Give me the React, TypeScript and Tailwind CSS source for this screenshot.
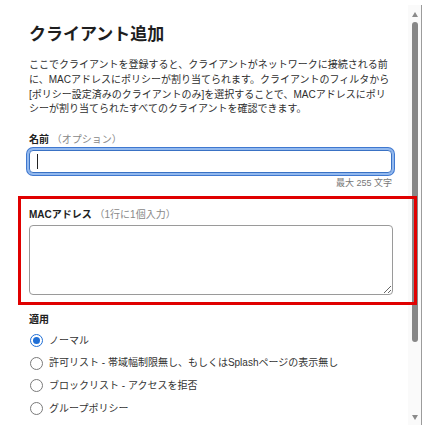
import React from "react";

const font = { fontFamily: '"Liberation Sans", "Noto Sans CJK JP", sans-serif' };

function Radio({ checked, label }: { checked?: boolean; label: string }) {
  return (
    <div className="flex h-[22.7px] items-center gap-[6px]">
      {checked ? (
        <span className="ml-[1px] flex h-[13px] w-[13px] items-center justify-center rounded-full border-[1.5px] border-[#1f6fd6]">
          <span className="h-[7px] w-[7px] rounded-full bg-[#1f6fd6]" />
        </span>
      ) : (
        <span className="ml-[1px] h-[13px] w-[13px] rounded-full border-[1.5px] border-[#7a7a7a]" />
      )}
      <span className="text-[10px] leading-[14px] text-[#333] whitespace-nowrap">{label}</span>
    </div>
  );
}

export default function App() {
  return (
    <div className="relative flex h-[447px] w-[434px] overflow-hidden bg-white" style={font}>
      <div className="w-[408px] shrink-0 pl-[29px] pr-[15px]">
        <h1 className="pt-[23px] text-[17px] font-bold leading-[24px] text-[#1e1e1e]">クライアント追加</h1>
        <p className="mt-[11px] whitespace-nowrap text-[10px] leading-[14.8px] text-[#2e2e2e]">
          ここでクライアントを登録すると、クライアントがネットワークに接続される前
          <br />
          に、MACアドレスにポリシーが割り当てられます。クライアントのフィルタから
          <br />
          [ポリシー設定済みのクライアントのみ]を選択することで、MACアドレスにポリ
          <br />
          シーが割り当てられたすべてのクライアントを確認できます。
        </p>
        <div className="mt-[16px] text-[10px] leading-[14px]">
          <span className="font-bold text-[#222]">名前</span>
          <span className="text-[#888]"> （オプション）</span>
        </div>
        <div className="mt-[3px] flex h-[23px] w-[363px] items-center rounded-[4px] border border-[#3a72c4] pl-[7px] shadow-[0_0_0_2px_#93b9ee,0_0_0_3px_#3f78d0]">
          <span className="h-[15px] w-px bg-[#222]" />
        </div>
        <div className="mt-[4px] w-[363px] text-right text-[9px] leading-[12px] text-[#777]">最大 255 文字</div>
        <div className="mt-[19px] text-[10px] leading-[14px]">
          <span className="font-bold text-[#222]">MACアドレス</span>
          <span className="text-[#888]"> （1行に1個入力）</span>
        </div>
        <textarea className="mt-[3px] block h-[70px] w-[364px] rounded-[4px] border border-[#9a9a9a] bg-white outline-none" />
        <div className="mt-[18px] text-[10px] font-bold leading-[14px] text-[#222]">適用</div>
        <div className="mt-[2px] flex flex-col">
          <Radio checked label="ノーマル" />
          <Radio label="許可リスト - 帯域幅制限無し、もしくはSplashページの表示無し" />
          <Radio label="ブロックリスト - アクセスを拒否" />
          <Radio label="グループポリシー" />
        </div>
      </div>
      <div className="w-[14px] shrink-0 pt-[5px]">
        <div className="flex h-[420px] flex-col items-center border-r border-[#9c9c9c] bg-[#fafafa] pb-[5px] pt-[7px]">
          <span className="h-0 w-0 border-x-[3px] border-b-[5px] border-x-transparent border-b-[#8a8a8a]" />
          <span className="mt-[5px] h-[320px] w-[6px] rounded-full bg-[#878787]" />
          <span className="flex-1" />
          <span className="h-0 w-0 border-x-[3px] border-t-[5px] border-x-transparent border-t-[#8a8a8a]" />
        </div>
      </div>
      <div className="pointer-events-none absolute left-[18px] top-[196px] h-[109px] w-[399px] border-[3px] border-[#e00000]" />
    </div>
  );
}
